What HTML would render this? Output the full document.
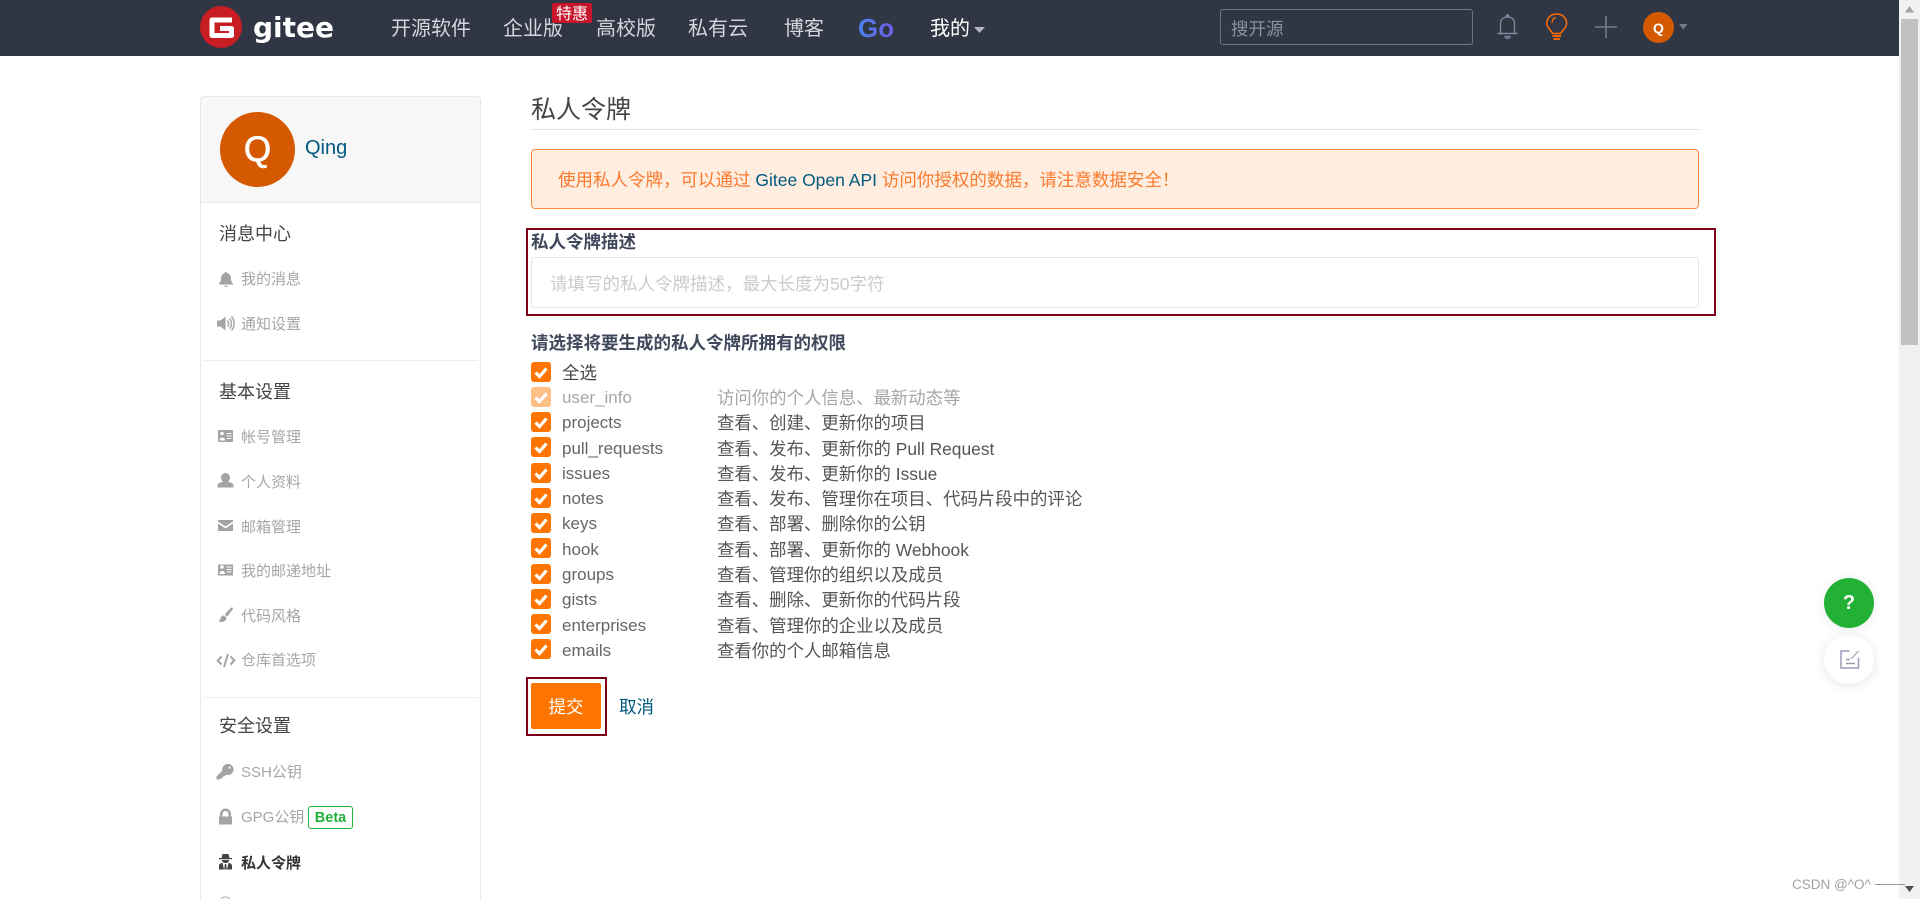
<!DOCTYPE html>
<html lang="zh-CN">
<head>
<meta charset="utf-8">
<title>私人令牌</title>
<style>
html,body{margin:0;padding:0;width:1920px;height:899px;overflow:hidden;background:#fff}
body{position:relative;font-family:"Liberation Sans","Noto Sans CJK SC",sans-serif;font-size:17.5px;color:#40485b}
.t{position:absolute;white-space:nowrap;line-height:30px;height:30px;margin-top:1px}
.b{position:absolute;box-sizing:border-box}
svg{position:absolute;overflow:visible}
.nav{color:#d3d6dc;font-size:20px}
.h{color:#444;font-size:18px}
.i{color:#a6a6a6;font-size:15px}
.l{color:#666;font-size:17px}
.d{color:#555;font-size:17.4px}
.c{position:absolute;left:531px;width:20px;height:20px;border-radius:3px;background:#ff7500}
.c svg{left:0;top:0}
.red{position:absolute;box-sizing:border-box;border:2px solid #7d0019}
.g{fill:#a3a3a3}
</style>
</head>
<body>
<!-- nav -->
<div class="b" style="left:0;top:0;width:1900px;height:56px;background:#303643"></div>
<svg style="left:0;top:0" width="400" height="56">
<circle cx="221" cy="27" r="21" fill="#c71d23"/>
<path d="M232 20H212V35.500H231.500V28.500H220" fill="none" stroke="#fff" stroke-width="5" stroke-linejoin="round"/>
</svg>
<div class="t" style="left:253px;top:12px;color:#fff;font:bold 28px/30px 'DejaVu Sans',sans-serif">gitee</div>
<div class="t nav" style="left:391px;top:13px">开源软件</div>
<div class="t nav" style="left:503px;top:13px">企业版</div>
<div class="b" style="left:552px;top:3px;width:40px;height:20px;background:#c7162b;border-radius:2px"></div>
<div class="t" style="left:556px;top:-1px;color:#fff;font-size:16px">特惠</div>
<div class="t nav" style="left:596px;top:13px">高校版</div>
<div class="t nav" style="left:688px;top:13px">私有云</div>
<div class="t nav" style="left:784px;top:13px">博客</div>
<svg style="left:858px;top:10px" width="40" height="36">
<defs><linearGradient id="go" x1="0" x2="1" y1="0" y2="0"><stop offset="0" stop-color="#4b82ee"/><stop offset="1" stop-color="#6d5be0"/></linearGradient></defs>
<text x="0" y="27" font-family="Liberation Sans" font-weight="bold" font-size="26" fill="url(#go)">Go</text>
</svg>
<div class="t nav" style="left:930px;top:13px;color:#fff">我的</div>
<svg style="left:974px;top:27px" width="12" height="7"><path d="M0 0H11L5.500 6Z" fill="#b4b8c0"/></svg>

<div class="b" style="left:1220px;top:9px;width:253px;height:36px;border:1px solid #6d7585;border-radius:3px"></div>
<div class="t" style="left:1231px;top:13px;color:#8c919e;font-size:17.5px">搜开源</div>

<svg style="left:1497px;top:14px" width="22" height="26" fill="none" stroke="#7f8ba3" stroke-width="1.300">
<path d="M3.500 19V9.500C3.500 5.500 6.500 3 10.500 3S17.500 5.500 17.500 9.500V19"/>
<path d="M0.500 19.500H20.500" stroke-width="1.600"/>
<path d="M8.500 3L10.500 0.500L12.500 3" fill="#7f8ba3"/>
<path d="M8 22.500H13C13 25 8 25 8 22.500Z"/>
</svg>
<svg style="left:1546px;top:13px" width="22" height="28" fill="none" stroke="#ff6d00" stroke-width="1.500">
<path d="M6.500 20.500C5.500 17 0.800 15.500 0.800 10.500C0.800 5 5 1 10.700 1S20.600 5 20.600 10.500C20.600 15.500 15.900 17 14.900 20.500Z"/>
<path d="M6.500 23H15M7.500 26H14" stroke-width="1.700"/>
<path d="M6 10C6 7 7.500 5 10 4.500" stroke-width="1.200"/>
</svg>
<svg style="left:1595px;top:16px" width="22" height="22" fill="none" stroke="#737c8e" stroke-width="1.600"><path d="M0 11H22M11 0V22"/></svg>
<div class="b" style="left:1643px;top:12px;width:31px;height:31px;border-radius:50%;background:#d55900"></div>
<div class="t" style="left:1643px;top:12px;width:31px;text-align:center;color:#fff;font-size:14px;font-weight:bold">Q</div>
<svg style="left:1679px;top:24px" width="9" height="6"><path d="M0 0H8.500L4.200 5.500Z" fill="#747b89"/></svg>

<!-- sidebar -->
<div class="b" style="left:200px;top:96px;width:281px;height:830px;border:1px solid #e3e9ed;border-radius:4px"></div>
<div class="b" style="left:201px;top:97px;width:279px;height:106px;background:#f7f7f7;border-bottom:1px solid #e8e8e8;border-radius:4px 4px 0 0"></div>
<div class="b" style="left:220px;top:112px;width:75px;height:75px;border-radius:50%;background:#d55900"></div>
<div class="t" style="left:220px;top:134px;width:75px;text-align:center;color:#fff;font-size:35px;-webkit-text-stroke:.7px #fff">Q</div>
<div class="t" style="left:305px;top:132px;color:#005980;font-size:20px">Qing</div>

<div class="t h" style="left:219px;top:218px">消息中心</div>
<div class="t i" style="left:241px;top:264px">我的消息</div>
<div class="t i" style="left:241px;top:309px">通知设置</div>
<div class="b" style="left:203px;top:360px;width:275px;height:1px;background:#eee"></div>
<div class="t h" style="left:219px;top:376px">基本设置</div>
<div class="t i" style="left:241px;top:422px">帐号管理</div>
<div class="t i" style="left:241px;top:467px">个人资料</div>
<div class="t i" style="left:241px;top:512px">邮箱管理</div>
<div class="t i" style="left:241px;top:556px">我的邮递地址</div>
<div class="t i" style="left:241px;top:601px">代码风格</div>
<div class="t i" style="left:241px;top:645px">仓库首选项</div>
<div class="b" style="left:203px;top:697px;width:275px;height:1px;background:#eee"></div>
<div class="t h" style="left:219px;top:710px">安全设置</div>
<div class="t i" style="left:241px;top:757px">SSH公钥</div>
<div class="t i" style="left:241px;top:802px">GPG公钥</div>
<div class="b" style="left:308px;top:806px;width:45px;height:23px;border:1px solid #22b13c;border-radius:3px"></div>
<div class="t" style="left:308px;top:802px;width:45px;text-align:center;color:#22b13c;font-size:14.5px;font-weight:bold">Beta</div>
<div class="t i" style="left:241px;top:848px;color:#333;font-weight:bold">私人令牌</div>

<svg style="left:0;top:0" width="240" height="899">
<!-- bell -->
<path class="g" d="M226 272c1 0 1.500.600 1.500 1.300 2.500.700 3.500 2.700 3.500 5.700 0 2 .8 3.500 2 4.500v1H219v-1c1.200-1 2-2.500 2-4.500 0-3 1-5 3.500-5.700 0-.7.500-1.300 1.500-1.300zM224.500 285.500h3c0 1-.7 1.500-1.500 1.500s-1.500-.5-1.500-1.500z"/>
<!-- volume -->
<path class="g" d="M217 320.500h3.500l5-4v14l-5-4H217z"/>
<path d="M227.500 320.500c1.500 1.500 1.500 4.500 0 6M229.500 318.500c2.600 2.800 2.600 7.200 0 10M231.500 316.500c3.500 4 3.500 10 0 14" fill="none" stroke="#a3a3a3" stroke-width="1.400"/>
<!-- id card 1 -->
<path class="g" fill-rule="evenodd" d="M218 430h15v12h-15zM220.200 433.500a1.800 1.800 0 1 0 3.600 0 1.800 1.800 0 1 0-3.600 0zM219.500 440.500h5.500c0-2-1-3-2.700-3s-2.800 1-2.800 3zM226.500 433v1h5v-1zM226.500 435.500v1h5v-1zM226.500 438v1h5v-1z"/>
<!-- user -->
<path class="g" d="M225.500 473a4.500 4.500 0 0 1 4.500 4.500c0 2-1 3.300-1.800 4 .3.800 5.300 1.500 5.300 3.300v2.700h-16v-2.700c0-1.800 5-2.500 5.300-3.300-.8-.7-1.800-2-1.800-4a4.500 4.500 0 0 1 4.500-4.500z"/>
<!-- envelope -->
<path class="g" d="M218 520h15v1.500l-7.500 5-7.500-5zM218 523.500l7.500 5 7.500-5v7.500h-15z"/>
<!-- id card 2 -->
<path class="g" fill-rule="evenodd" d="M218 564.500h15v11h-15zM220.200 567a1.800 1.800 0 1 0 3.600 0 1.800 1.800 0 1 0-3.600 0zM219.500 574h5.500c0-2-1-3-2.700-3s-2.800 1-2.800 3zM226.500 566.500v1h5v-1zM226.500 569v1h5v-1zM226.500 571.500v1h5v-1z"/>
<!-- brush -->
<path class="g" d="M232.500 607.500c.8.500.3 1.500-.3 2.500l-5 6.500-2.500-2 6-6.500c.6-.5 1.300-.9 1.800-.5zM224 615.500l2.500 2c0 3-2.500 4.500-5 4.500-1.200 0-2.500-.4-3.300-1 1.500-.3 2-1 2.200-2.300.3-2 2-3.200 3.600-3.200z"/>
<!-- code -->
<path d="M221.500 656.500l-3.800 4 3.800 4M230.500 656.500l3.800 4-3.800 4M228 654l-4 13" fill="none" stroke="#a3a3a3" stroke-width="2"/>
<!-- key -->
<path class="g" fill-rule="evenodd" d="M228 764a5.500 5.500 0 0 1 0 11c-.7 0-1.300-.1-1.800-.3l-1.700 1.800h-2v2h-2l-1 1h-3v-3l6-6c-.2-.5-.3-1-.3-1.700a5.500 5.500 0 0 1 5.800-4.800zM229.500 766.500a1.100 1.100 0 1 0 0 2.200 1.100 1.100 0 1 0 0-2.200z"/>
<!-- lock -->
<path class="g" fill-rule="evenodd" d="M225.500 808.500a5.500 5.500 0 0 1 5.500 5.500v2.500h1v8h-13v-8h1V814a5.500 5.500 0 0 1 5.500-5.500zM225.500 811a3 3 0 0 0-3 3v2.500h6V814a3 3 0 0 0-3-3z"/>
<!-- spy -->
<path fill="#444" d="M222.500 854h6l1 4h2.500v1.200h-13V858h2.500zM222 860h7c0 2-1.500 3-3.500 3s-3.500-1-3.500-3zM219 869.500v-4c0-1.300 1.500-2.300 3.500-2.600l1.500 6.600zM232 869.500v-4c0-1.300-1.500-2.300-3.500-2.600l-1.500 6.600zM224.800 864h1.400l.5 5.500h-2.400z"/>
<!-- cut icon -->
<path d="M221 899c1-1.500 3-2 4.500-2s3.500.5 4.500 2" fill="none" stroke="#bbb" stroke-width="1.300"/>
</svg>

<!-- main -->
<div class="t" style="left:531px;top:94px;color:#444;font-size:25px">私人令牌</div>
<div class="b" style="left:531px;top:129px;width:1169px;height:1px;background:#e3e3e3"></div>
<div class="b" style="left:531px;top:149px;width:1168px;height:60px;background:#ffeddf;border:1.5px solid #ff8a3d;border-radius:4px"></div>
<div class="t" style="left:558px;top:164px;color:#fa7a2e"><span>使用私人令牌&#xFF0C;可以通过 </span><span style="color:#005980">Gitee Open API</span><span> 访问你授权的数据&#xFF0C;请注意数据安全&#xFF01;</span></div>

<div class="red" style="left:526px;top:228px;width:1190px;height:88px"></div>
<div class="t" style="left:531px;top:226px;font-weight:bold">私人令牌描述</div>
<div class="b" style="left:531px;top:257px;width:1168px;height:51px;border:1px solid #e3e6ee;border-radius:3px"></div>
<div class="t" style="left:550px;top:268px;color:#c9cbcf">请填写的私人令牌描述&#xFF0C;最大长度为50字符</div>
<div class="t" style="left:531px;top:327px;font-weight:bold">请选择将要生成的私人令牌所拥有的权限</div>

<div class="c" style="top:362px"><svg width="20" height="20"><path d="M4.500 10.500l4 4 7-8" fill="none" stroke="#fff" stroke-width="3.200"/></svg></div>
<div class="t" style="left:562px;top:357px;color:#444">全选</div>

<div class="c" style="top:387px;background:#ffbf87"><svg width="20" height="20"><path d="M4.500 10.500l4 4 7-8" fill="none" stroke="#fff" stroke-width="3.200"/></svg></div>
<div class="t l" style="left:562px;top:382px;color:#a6a6a6">user_info</div>
<div class="t d" style="left:717px;top:382px;color:#a6a6a6">访问你的个人信息、最新动态等</div>

<div class="c" style="top:412px"><svg width="20" height="20"><path d="M4.500 10.500l4 4 7-8" fill="none" stroke="#fff" stroke-width="3.200"/></svg></div>
<div class="t l" style="left:562px;top:407px">projects</div>
<div class="t d" style="left:717px;top:407px">查看、创建、更新你的项目</div>

<div class="c" style="top:437px"><svg width="20" height="20"><path d="M4.500 10.500l4 4 7-8" fill="none" stroke="#fff" stroke-width="3.200"/></svg></div>
<div class="t l" style="left:562px;top:433px">pull_requests</div>
<div class="t d" style="left:717px;top:433px">查看、发布、更新你的 Pull Request</div>

<div class="c" style="top:463px"><svg width="20" height="20"><path d="M4.500 10.500l4 4 7-8" fill="none" stroke="#fff" stroke-width="3.200"/></svg></div>
<div class="t l" style="left:562px;top:458px">issues</div>
<div class="t d" style="left:717px;top:458px">查看、发布、更新你的 Issue</div>

<div class="c" style="top:488px"><svg width="20" height="20"><path d="M4.500 10.500l4 4 7-8" fill="none" stroke="#fff" stroke-width="3.200"/></svg></div>
<div class="t l" style="left:562px;top:483px">notes</div>
<div class="t d" style="left:717px;top:483px">查看、发布、管理你在项目、代码片段中的评论</div>

<div class="c" style="top:513px"><svg width="20" height="20"><path d="M4.500 10.500l4 4 7-8" fill="none" stroke="#fff" stroke-width="3.200"/></svg></div>
<div class="t l" style="left:562px;top:508px">keys</div>
<div class="t d" style="left:717px;top:508px">查看、部署、删除你的公钥</div>

<div class="c" style="top:538px"><svg width="20" height="20"><path d="M4.500 10.500l4 4 7-8" fill="none" stroke="#fff" stroke-width="3.200"/></svg></div>
<div class="t l" style="left:562px;top:534px">hook</div>
<div class="t d" style="left:717px;top:534px">查看、部署、更新你的 Webhook</div>

<div class="c" style="top:564px"><svg width="20" height="20"><path d="M4.500 10.500l4 4 7-8" fill="none" stroke="#fff" stroke-width="3.200"/></svg></div>
<div class="t l" style="left:562px;top:559px">groups</div>
<div class="t d" style="left:717px;top:559px">查看、管理你的组织以及成员</div>

<div class="c" style="top:589px"><svg width="20" height="20"><path d="M4.500 10.500l4 4 7-8" fill="none" stroke="#fff" stroke-width="3.200"/></svg></div>
<div class="t l" style="left:562px;top:584px">gists</div>
<div class="t d" style="left:717px;top:584px">查看、删除、更新你的代码片段</div>

<div class="c" style="top:614px"><svg width="20" height="20"><path d="M4.500 10.500l4 4 7-8" fill="none" stroke="#fff" stroke-width="3.200"/></svg></div>
<div class="t l" style="left:562px;top:610px">enterprises</div>
<div class="t d" style="left:717px;top:610px">查看、管理你的企业以及成员</div>

<div class="c" style="top:639px"><svg width="20" height="20"><path d="M4.500 10.500l4 4 7-8" fill="none" stroke="#fff" stroke-width="3.200"/></svg></div>
<div class="t l" style="left:562px;top:635px">emails</div>
<div class="t d" style="left:717px;top:635px">查看你的个人邮箱信息</div>

<div class="red" style="left:526px;top:677px;width:81px;height:59px"></div>
<div class="b" style="left:531px;top:683px;width:70px;height:46px;background:#ff7500;border-radius:2px"></div>
<div class="t" style="left:531px;top:691px;width:70px;text-align:center;color:#fff">提交</div>
<div class="t" style="left:619px;top:691px;color:#005980">取消</div>

<!-- floating -->
<div class="b" style="left:1824px;top:578px;width:50px;height:50px;border-radius:50%;background:#22b135;box-shadow:0 2px 12px rgba(0,0,0,.08)"></div>
<div class="t" style="left:1824px;top:587px;width:50px;text-align:center;color:#fff;font-size:20px;font-weight:bold">?</div>
<div class="b" style="left:1824px;top:635px;width:50px;height:49px;border-radius:50%;background:#fff;box-shadow:0 2px 12px rgba(0,0,0,.1)"></div>
<svg style="left:1840px;top:650px" width="20" height="20" fill="none" stroke="#9a9db8" stroke-width="1.500">
<path d="M9.500 1H1V18H18.500V8"/><path d="M6 9.500H10M6 13.500H15"/><path d="M11 9L18.500 1" stroke-width="1.200"/>
</svg>

<!-- scrollbar -->
<div class="b" style="left:1899px;top:0;width:21px;height:899px;background:#f1f1f1"></div>
<div class="b" style="left:1901px;top:19px;width:17px;height:326px;background:#c1c1c1"></div>
<svg style="left:1905px;top:6px" width="10" height="7"><path d="M0 6.500L4.500 0L9 6.500Z" fill="#a3a3a3"/></svg>
<svg style="left:1905px;top:886px" width="10" height="7"><path d="M0 0H9L4.500 6Z" fill="#505050"/></svg>

<!-- watermark -->
<div class="t" style="left:1792px;top:869px;color:#a0a0a0;font-size:13.500px">CSDN @^O^</div>
<div class="b" style="left:1875px;top:884px;width:30px;height:1px;background:#999"></div>
</body>
</html>
